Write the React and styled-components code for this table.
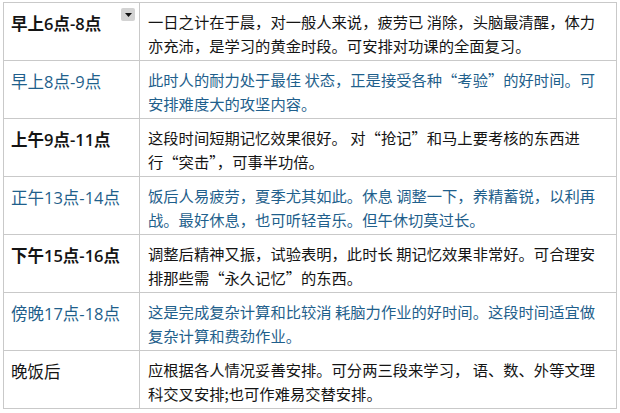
import styled, { createGlobalStyle } from "styled-components";

const GlobalStyle = createGlobalStyle`
  html, body {
    margin: 0;
    padding: 0;
    background: #ffffff;
  }
  body {
    font-family: "Noto Sans CJK SC", "Noto Sans", sans-serif;
  }
`;

const rows = [
  {
    time: "早上6点-8点",
    tone: "dark",
    bold: true,
    menu: true,
    lines: [
      "一日之计在于晨，对一般人来说，疲劳已 消除，头脑最清醒，体力",
      "亦充沛，是学习的黄金时段。可安排对功课的全面复习。",
    ],
  },
  {
    time: "早上8点-9点",
    tone: "blue",
    lines: [
      "此时人的耐力处于最佳 状态，正是接受各种“考验”的好时间。可",
      "安排难度大的攻坚内容。",
    ],
  },
  {
    time: "上午9点-11点",
    tone: "dark",
    bold: true,
    lines: [
      "这段时间短期记忆效果很好。 对“抢记”和马上要考核的东西进",
      "行“突击”，可事半功倍。",
    ],
  },
  {
    time: "正午13点-14点",
    tone: "blue",
    lines: [
      "饭后人易疲劳，夏季尤其如此。休息 调整一下，养精蓄锐，以利再",
      "战。最好休息，也可听轻音乐。但午休切莫过长。",
    ],
  },
  {
    time: "下午15点-16点",
    tone: "dark",
    bold: true,
    lines: [
      "调整后精神又振，试验表明，此时长 期记忆效果非常好。可合理安",
      "排那些需“永久记忆”的东西。",
    ],
  },
  {
    time: "傍晚17点-18点",
    tone: "blue",
    lines: [
      "这是完成复杂计算和比较消 耗脑力作业的好时间。这段时间适宜做",
      "复杂计算和费劲作业。",
    ],
  },
  {
    time: "晚饭后",
    tone: "dark",
    lines: [
      "应根据各人情况妥善安排。可分两三段来学习， 语、数、外等文理",
      "科交叉安排;也可作难易交替安排。",
    ],
  },
];

const colors = {
  dark: "#141414",
  blue: "#1f5f8c",
};

const App = () => {
  return (
    <>
      <GlobalStyle />
      <Page>
        <Schedule>
          <tbody>
            {rows.map((row) => (
              <Row key={row.time}>
                <TimeCell $tone={row.tone} $bold={row.bold}>
                  {row.time}
                  {row.menu && (
                    <MenuButton aria-label="menu">
                      <svg width="7" height="4" viewBox="0 0 7 4">
                        <path d="M0 0h7L3.5 4z" fill="#111" />
                      </svg>
                    </MenuButton>
                  )}
                </TimeCell>
                <DescCell $tone={row.tone}>
                  {row.lines.map((line) => (
                    <Line key={line}>{line}</Line>
                  ))}
                </DescCell>
              </Row>
            ))}
          </tbody>
        </Schedule>
      </Page>
    </>
  );
};

const Page = styled.div`
  padding: 2px 3px 0 3px;
`;

const Schedule = styled.table`
  width: 614px;
  border-collapse: collapse;
  border: 1px solid #c9c9c9;
  table-layout: fixed;
`;

const Row = styled.tr`
  height: 58px;
`;

const TimeCell = styled.td`
  position: relative;
  width: 136px;
  box-sizing: border-box;
  padding: 9px 6px 0 7px;
  vertical-align: top;
  border: 1px solid #c9c9c9;
  font-family: "Open Sans", "Noto Sans CJK SC", sans-serif;
  font-size: 16.5px;
  line-height: 24px;
  font-weight: ${(props) => (props.$bold ? 600 : 400)};
  color: ${(props) => colors[props.$tone]};
  white-space: nowrap;
`;

const MenuButton = styled.span`
  position: absolute;
  top: 5px;
  right: 4px;
  width: 14px;
  height: 13px;
  border-radius: 2px;
  background: #d3d3d3;
  display: flex;
  align-items: center;
  justify-content: center;
`;

const DescCell = styled.td`
  padding: 6px 4px 0 8px;
  vertical-align: top;
  border: 1px solid #c9c9c9;
  font-size: 15.3px;
  line-height: 24px;
  color: ${(props) => colors[props.$tone]};
`;

const Line = styled.div`
  white-space: nowrap;
`;

export default App;
